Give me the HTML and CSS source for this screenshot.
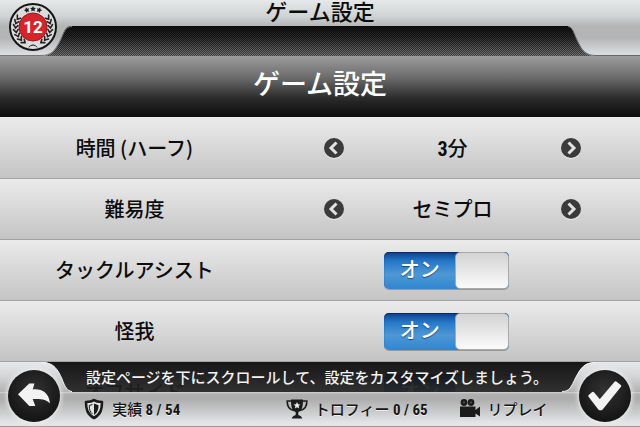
FILE: index.html
```html
<!DOCTYPE html>
<html lang="ja">
<head>
    <meta charset="UTF-8">
    <meta name="viewport" content="width=device-width, initial-scale=1.0">
    <title>ゲーム設定</title>
    <link rel="stylesheet" href="styles.css">
</head>
<body>

    <header class="top-bar">
        <h1 class="top-title">ゲーム設定</h1>
        <div class="notch">
            <svg class="shoulder" viewBox="0 0 72 30" aria-hidden="true">
                <defs>
                    <linearGradient id="silver-top" x1="0" y1="0" x2="0" y2="1">
                        <stop offset="0" stop-color="#b4b6b6"/>
                        <stop offset="0.4" stop-color="#b4b5b6"/>
                        <stop offset="1" stop-color="#dfe2e4"/>
                    </linearGradient>
                </defs>
                <path d="M0 0H72C64 0 64 7 60 15C55 25 51 30 41 30H0Z" fill="url(#silver-top)"/>
                <path d="M72 .5C65 .5 64 7 60 15C55 25 51 29.500 41 29.500H0" fill="none" stroke="#777"/>
            </svg>
            <svg class="shoulder" viewBox="0 0 72 30" aria-hidden="true">
                <path d="M72 0H-4C5 0 5 6 9 14C14 25 18 30 28 30H72Z" fill="url(#silver-top)"/>
                <path d="M0 .5C5 1 6 8 9 14C14 25 18 29.500 28 29.500H72" fill="none" stroke="#666"/>
            </svg>
        </div>
        <svg class="badge" viewBox="0 0 50 50" role="img" aria-label="レベル 12">
            <circle cx="25" cy="25" r="23" fill="#dcdcdc" stroke="#151515" stroke-width="2"/>
            <g fill="#1b1b1b">
                <path id="star" d="M25 4l.9 1.800 2 .3-1.500 1.400.4 2-1.800-1-1.800 1 .4-2-1.500-1.400 2-.3z"/>
                <use href="#star" transform="rotate(20 25 25)"/>
                <use href="#star" transform="rotate(-20 25 25)"/>
            </g>
            <g id="laurel" fill="none" stroke="#222" stroke-width="1.600" stroke-linecap="round">
                <path id="leaf" d="M44.500 22.500l-2 3.500-2.500-2.500"/>
                <use href="#leaf" transform="rotate(-15 25 25)"/>
                <use href="#leaf" transform="rotate(-30 25 25)"/>
                <use href="#leaf" transform="rotate(15 25 25)"/>
                <use href="#leaf" transform="rotate(30 25 25)"/>
                <use href="#leaf" transform="rotate(45 25 25)"/>
                <use href="#leaf" transform="rotate(60 25 25)"/>
                <path d="M25 43q3 0 4 2" stroke-width="1"/>
            </g>
            <use href="#laurel" transform="matrix(-1 0 0 1 50 0)"/>
            <circle cx="25" cy="25" r="14" fill="#d3252b" stroke="#9b171c" stroke-width="1"/>
            <text x="25" y="31" class="badge-level">12</text>
        </svg>
    </header>

    <main class="settings">
        <h2 class="settings-title">ゲーム設定</h2>

        <div class="row">
            <span class="row-label" id="time-label">時間 (ハーフ)</span>
            <div class="stepper" role="group" aria-labelledby="time-label">
                <button type="button" class="step-btn" aria-label="前へ">
                    <svg viewBox="0 0 20 20"><path d="M12.500 4.500L7 10l5.500 5.500"/></svg>
                </button>
                <span class="step-value"><span class="num">3</span>分</span>
                <button type="button" class="step-btn" aria-label="次へ">
                    <svg viewBox="0 0 20 20"><path d="M7.500 4.500L13 10l-5.500 5.500"/></svg>
                </button>
            </div>
        </div>

        <div class="row">
            <span class="row-label" id="level-label">難易度</span>
            <div class="stepper" role="group" aria-labelledby="level-label">
                <button type="button" class="step-btn" aria-label="前へ">
                    <svg viewBox="0 0 20 20"><path d="M12.500 4.500L7 10l5.500 5.500"/></svg>
                </button>
                <span class="step-value">セミプロ</span>
                <button type="button" class="step-btn" aria-label="次へ">
                    <svg viewBox="0 0 20 20"><path d="M7.500 4.500L13 10l-5.500 5.500"/></svg>
                </button>
            </div>
        </div>

        <div class="row">
            <label class="row-label" for="tackle">タックルアシスト</label>
            <div class="switch">
                <input type="checkbox" id="tackle" checked>
                <span class="switch-text">オン</span>
            </div>
        </div>

        <div class="row">
            <label class="row-label" for="injury">怪我</label>
            <div class="switch">
                <input type="checkbox" id="injury" checked>
                <span class="switch-text">オン</span>
            </div>
        </div>

        <div class="row">
            <label class="row-label" for="offside">オフサイド</label>
            <div class="switch">
                <input type="checkbox" id="offside" checked>
                <span class="switch-text">オン</span>
            </div>
        </div>
    </main>

    <footer class="bottom-bar">
        <div class="hint">
            <svg class="shoulder" viewBox="0 0 72 30" aria-hidden="true">
                <defs>
                    <linearGradient id="silver-bottom" x1="0" y1="0" x2="0" y2="1">
                        <stop offset="0" stop-color="#e6e8ea"/>
                        <stop offset="0.5" stop-color="#d2d4d6"/>
                        <stop offset="1" stop-color="#b2b2b2"/>
                    </linearGradient>
                </defs>
                <path d="M0 0H42C54 0 58 8 62 17C65 25 67 30 76 30H0Z" fill="url(#silver-bottom)"/>
                <path d="M42 .5C54 .5 58 8 62 17C65 25 67 29 72 29.500" fill="none" stroke="#f4f4f4"/>
            </svg>
            <p class="hint-text">設定ページを下にスクロールして、設定をカスタマイズしましょう。</p>
            <svg class="shoulder" viewBox="0 0 78 30" aria-hidden="true">
                <path d="M78 0H34C22 0 19 6 14 15C9 25 8 30 -2 30H78Z" fill="url(#silver-bottom)"/>
                <path d="M34 .5C22 .5 19 6 14 15C9 25 8 29.500 0 29.500" fill="none" stroke="#f4f4f4"/>
            </svg>
        </div>
        <nav class="links">
            <a href="#" class="link">
                <svg viewBox="0 0 22 22" aria-hidden="true">
                    <path d="M3 4C6 4 9 3.500 11 2C13 3.500 16 4 19 4C19 11 18 16 11 20C4 16 3 11 3 4Z" fill="#e3e3e3" stroke="#1b1b1b" stroke-width="2.600" stroke-linejoin="round"/>
                    <path d="M11 5.500L15.500 7.300C15.500 11.500 14.500 14.500 11 17Z" fill="#1b1b1b"/>
                    <path d="M9.500 6.500L6.200 7.500C6.300 11.500 7 14 9.500 16" fill="none" stroke="#1b1b1b" stroke-width="1"/>
                </svg>
                <span>実績 <span class="num">8 / 54</span></span>
            </a>
            <a href="#" class="link">
                <svg viewBox="0 0 22 22" aria-hidden="true">
                    <path d="M5.500 3H1.200C1 8 3 11.500 8 12.500M16.500 3h4.300C21 8 19 11.500 14 12.500" fill="none" stroke="#1b1b1b" stroke-width="1.600"/>
                    <path d="M5 1.500h12C17 9 16 13 12.300 14v3c1.500.5 3.200 1 4 3.500H5.700c.8-2.500 2.500-3 4-3.500v-3C6 13 5 9 5 1.500z" fill="#1b1b1b"/>
                    <path d="M11 4l1 2.200 2.400.3-1.800 1.600.5 2.400-2.100-1.200-2.100 1.200.5-2.400-1.800-1.600 2.400-.3z" fill="#eee"/>
                </svg>
                <span>トロフィー <span class="num">0 / 65</span></span>
            </a>
            <a href="#" class="link">
                <svg viewBox="0 0 22 22" aria-hidden="true">
                    <g fill="#1b1b1b">
                        <circle cx="5" cy="4.500" r="3.400"/>
                        <circle cx="12" cy="4.500" r="3.400"/>
                        <path d="M1 8.500h15.500v3.500L21 8.500v10L16.500 15.500v3.500H1z"/>
                    </g>
                    <circle cx="5" cy="4.500" r="1" fill="#555"/>
                    <circle cx="12" cy="4.500" r="1" fill="#555"/>
                </svg>
                <span>リプレイ</span>
            </a>
        </nav>
        <button type="button" class="round-btn back" aria-label="戻る">
            <svg viewBox="0 0 52 52"><path d="M10 24.300L21.300 13.500H26.500L24.700 19.500C33 18.500 41 22 42 33.500C39 29.500 33 28.500 24.700 29L27.300 36H21.300Z"/></svg>
        </button>
        <button type="button" class="round-btn confirm" aria-label="決定">
            <svg viewBox="0 0 52 52"><path d="M10.500 26L14 23L20.800 31L36.500 12.500L41 16L22.500 39H20.500Z" stroke="#f3f3f3" stroke-width="2.500" stroke-linejoin="round"/></svg>
        </button>
    </footer>

</body>
</html>
```

FILE: styles.css
```css
/* General styles */
* {
    box-sizing: border-box;
}

body {
    font-family: "Noto Sans CJK JP", sans-serif;
    font-weight: 500;
    color: #0c0c0c;
    background-color: #c8c8c8;
    margin: 0;
    height: 100vh;
    overflow: hidden;
    position: relative;
}

h1,
h2,
p {
    margin: 0;
    font-weight: 500;
}

button {
    padding: 0;
    border: none;
    cursor: pointer;
}

.num {
    font-family: "Roboto Condensed", "Roboto", sans-serif;
    font-weight: bold;
}

.shoulder {
    display: block;
    height: 30px;
    flex: none;
}

/* Top bar */
.top-bar {
    position: relative;
    background: linear-gradient(#e6e8e9, #d0d4d5 16px, #b4b6b6 26px);
}

.top-title {
    height: 26px;
    line-height: 20px;
    font-size: 22px;
    text-align: center;
}

.notch {
    display: flex;
    justify-content: space-between;
    height: 30px;
    background:
        repeating-conic-gradient(rgba(0, 0, 0, 0.5) 0 25%, transparent 0 50%) 0 0 / 2px 2px,
        linear-gradient(#101010, #2c2c2c 40%, #7a7a7a);
}

.badge {
    position: absolute;
    left: 8px;
    top: 2px;
    width: 50px;
    height: 50px;
}

.badge-level {
    font: bold 17px "Roboto", sans-serif;
    fill: #fff;
    text-anchor: middle;
}

/* Settings list */
.settings-title {
    height: 62px;
    line-height: 54px;
    font-size: 27px;
    text-align: center;
    color: #fff;
    background: linear-gradient(#9c9c9c, #6c6c6c 35%, #2a2a2a 70%, #0c0c0c);
    border-bottom: 1px solid #f2eef0;
}

.row {
    display: grid;
    grid-template-columns: 42% 1fr;
    align-items: center;
    height: 61px;
    font-size: 20px;
    line-height: 28px;
    background: linear-gradient(#ebebeb, #c4c4c4);
    border-bottom: 1px solid #a2a2a2;
}

.row-label {
    text-align: center;
}

.stepper {
    display: flex;
    align-items: center;
    justify-content: space-between;
    width: 69%;
    margin-left: 15%;
}

.step-btn {
    width: 20px;
    height: 20px;
    border-radius: 50%;
    background-color: #3b3b3b;
    box-shadow: 0 1px 0 #eee;
}

.step-btn svg {
    display: block;
    fill: none;
    stroke: #e2e2e2;
    stroke-width: 3;
}

.switch {
    display: grid;
    width: 125px;
    margin-left: 31%;
}

.switch input,
.switch-text {
    grid-area: 1 / 1;
}

.switch input {
    appearance: none;
    display: flex;
    justify-content: flex-end;
    width: 125px;
    height: 37px;
    margin: 0;
    border-radius: 5px;
    background: linear-gradient(#0d3f8c, #2478c8 25%, #4f97d4 60%, #2f86d2);
    box-shadow: inset 0 1px 1px #0b2a66, 0 1px 0 #999;
    cursor: pointer;
}

.switch input::before {
    content: "";
    box-sizing: border-box;
    width: 54px;
    height: 37px;
    border: 1px solid #a9a9a9;
    border-radius: 5px;
    background: linear-gradient(#d3d3d3, #fbfbfb);
}

.switch input:not(:checked) {
    justify-content: flex-start;
}

.switch-text {
    width: 72px;
    line-height: 33px;
    text-align: center;
    color: #fff;
    text-shadow: 0 1px 1px #1c4a86;
    pointer-events: none;
}

.bottom-bar {
    position: absolute;
    left: 0;
    right: 0;
    bottom: 0;
}

.hint {
    display: flex;
    justify-content: space-between;
    height: 30px;
    background: linear-gradient(rgba(14, 14, 14, 0.96), rgba(34, 34, 34, 0.92));
}

.hint-text {
    font-size: 15px;
    line-height: 29px;
    color: #f2f2f2;
    white-space: nowrap;
}

.links {
    display: grid;
    grid-template-columns: 203fr 173fr 92fr;
    align-items: center;
    height: 35px;
    padding: 0 14% 0 13%;
    background: linear-gradient(#d4d4d4, #b0b0b0 2px, #adadad 20%, #e2e4e5 90%);
    border-bottom: 1px solid #9c9c9c;
}

.link {
    display: flex;
    align-items: center;
    gap: 7px;
    font-size: 15px;
    line-height: 20px;
    white-space: nowrap;
    color: #151515;
    text-decoration: none;
    text-shadow: 0 1px 0 #eee;
}

.link svg {
    width: 22px;
    height: 22px;
    flex: none;
}

.round-btn {
    position: absolute;
    bottom: 5px;
    width: 52px;
    height: 52px;
    border-radius: 50%;
    background: radial-gradient(circle at 50% 40%, #333, #161616 70%);
    box-shadow: 0 0 5px 1px #f0f0f0;
}

.round-btn svg {
    display: block;
    fill: #f3f3f3;
}

.back {
    left: 8px;
}

.confirm {
    right: 9px;
}
```
